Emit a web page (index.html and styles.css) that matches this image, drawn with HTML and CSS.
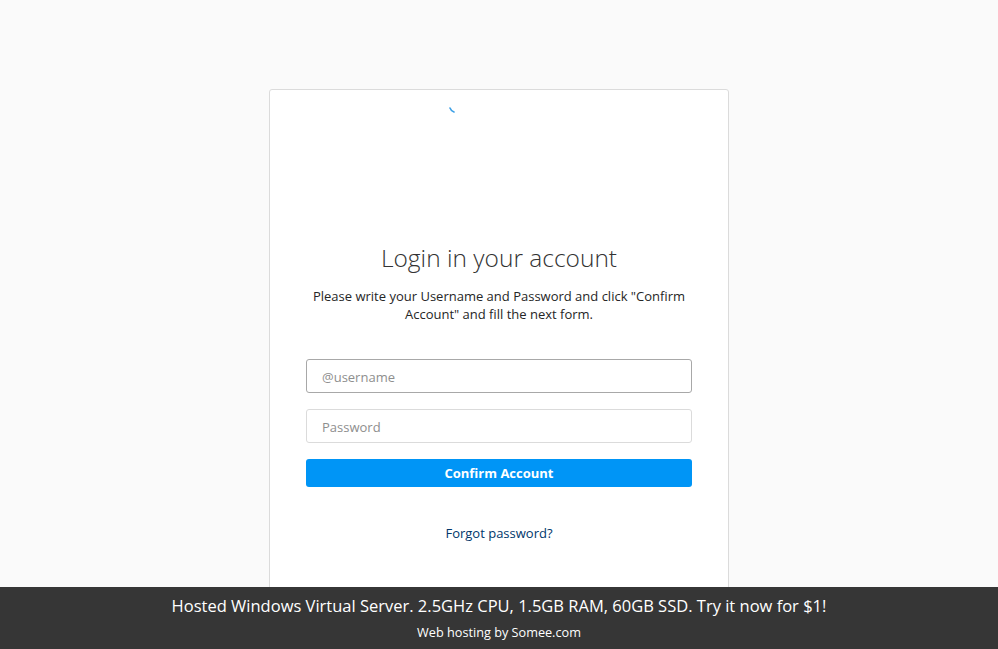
FILE: index.html
```html
<!DOCTYPE html>
<html lang="en">
<head>
<meta charset="utf-8">
<title>Login</title>
<link rel="stylesheet" href="styles.css">
</head>
<body>
<main class="page">
  <section class="card">
    <div class="logo-area">
      <svg class="spinner" width="8" height="8" viewBox="0 0 8 8"><path d="M1 1 Q2 4 5 5" fill="none" stroke="#3ca0e6" stroke-width="1.6" stroke-linecap="round"/></svg>
    </div>
    <h1 class="title">Login in your account</h1>
    <p class="lead">Please write your Username and Password and click "Confirm Account" and fill the next form.</p>
    <form class="form">
      <input class="field field-focus" type="text" placeholder="@username">
      <input class="field" type="password" placeholder="Password">
      <button class="btn" type="button">Confirm Account</button>
    </form>
    <a class="forgot" href="#">Forgot password?</a>
  </section>
</main>
<footer class="ad">
  <div class="ad-main">Hosted Windows Virtual Server. 2.5GHz CPU, 1.5GB RAM, 60GB SSD. Try it now for $1!</div>
  <div class="ad-sub">Web hosting by Somee.com</div>
</footer>
</body>
</html>
```
FILE: styles.css
```css
* { box-sizing: border-box; }
html, body { margin: 0; padding: 0; }
body {
  background: #fafafa;
  font-family: "Open Sans", "Noto Sans", sans-serif;
  color: #262626;
  height: 649px;
  overflow: hidden;
}
.page {
  display: flex;
  justify-content: center;
  padding-top: 89px;
}
.card {
  width: 460px;
  background: #fff;
  border: 1px solid #dbdbdb;
  border-radius: 3px;
  padding: 0 36px 60px;
  display: flex;
  flex-direction: column;
  align-items: stretch;
  text-align: center;
}
.logo-area {
  height: 153px;
  display: flex;
  align-items: flex-start;
  padding-top: 17px;
  padding-left: 143px;
}
.spinner { display: block; }
.title {
  margin: 0;
  font-size: 24.5px;
  line-height: 30px;
  font-weight: 300;
  color: #333;
}
.lead {
  margin: 14px 0 0;
  font-size: 13px;
  line-height: 18px;
  color: #262626;
  padding: 0 2px;
}
.form {
  margin-top: 36px;
  display: flex;
  flex-direction: column;
  gap: 16px;
}
.field {
  height: 34px;
  width: 100%;
  border: 1px solid #dbdbdb;
  border-radius: 3px;
  background: #fff;
  padding: 1px 15px 0;
  font-family: inherit;
  font-size: 13px;
  color: #262626;
  outline: none;
}
.field::placeholder { color: #8e8e8e; }
.field-focus { border-color: #a8a8a8; }
.btn {
  height: 28px;
  width: 100%;
  border: 0;
  border-radius: 3px;
  background: #0095f6;
  color: #fff;
  font-family: inherit;
  font-size: 13px;
  font-weight: 700;
  cursor: pointer;
}
.forgot {
  margin-top: 37px;
  font-size: 13px;
  line-height: 18px;
  color: #00376b;
  text-decoration: none;
}
.ad {
  position: fixed;
  left: 0;
  right: 0;
  bottom: 0;
  height: 62px;
  background: #363636;
  color: #fff;
  text-align: center;
  font-family: "Open Sans", sans-serif;
  padding-top: 8px;
}
.ad-main {
  font-size: 16.5px;
  line-height: 22px;
}
.ad-sub {
  margin-top: 7px;
  font-size: 12.7px;
  line-height: 16px;
}
```
